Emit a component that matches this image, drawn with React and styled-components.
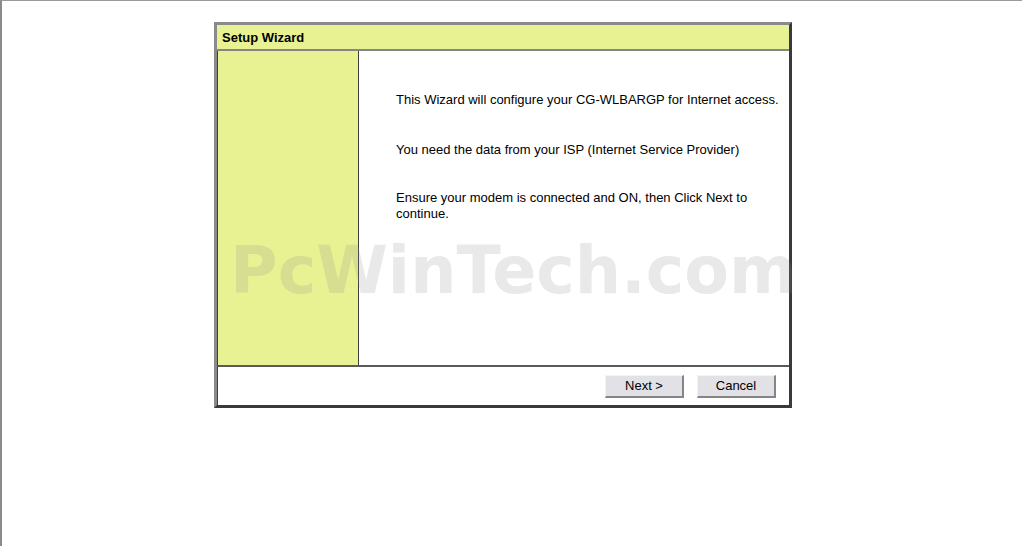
import React from "react";
import styled, { createGlobalStyle } from "styled-components";

const GlobalStyle = createGlobalStyle`
  html, body {
    margin: 0;
    padding: 0;
    background: #fff;
  }
  body {
    font-family: "Liberation Sans", Arial, sans-serif;
    color: #000;
  }
  * {
    box-sizing: border-box;
  }
`;

const Page = styled.div`
  position: relative;
  width: 100vw;
  height: 100vh;
  border-top: 1px solid #9a9a9a;
  border-left: 2px solid #8a8a8a;
  padding: 21px 18px 0 0;
  display: flex;
  justify-content: center;
  align-items: flex-start;
  overflow: hidden;
`;

const Frame = styled.div`
  width: 578px;
  height: 386px;
  display: flex;
  flex-direction: column;
  border-style: solid;
  border-width: 3px;
  border-color: #8a8a8a #3a3a3a #3a3a3a #8a8a8a;
  background: #fff;
`;

const Header = styled.div`
  flex: 0 0 26px;
  display: flex;
  align-items: center;
  padding-left: 5px;
  background: #e9f292;
  border-bottom: 2px solid #858585;
  font-size: 13px;
  font-weight: bold;
`;

const Body = styled.div`
  flex: 0 0 316px;
  display: flex;
  border-left: 1px solid #404040;
  border-bottom: 2px solid #5a5a5a;
`;

const SidePane = styled.div`
  flex: 0 0 141px;
  background: #e9f292;
  border-right: 1px solid #404040;
`;

const Content = styled.div`
  flex: 1;
  padding: 41px 3px 0 37px;
  font-size: 13px;
  line-height: 16px;
`;

const Para = styled.p`
  margin: ${(p) => p.$top || 0}px 0 0 0;
`;

const Footer = styled.div`
  flex: 1;
  display: flex;
  justify-content: flex-end;
  align-items: center;
  gap: 13px;
  padding-right: 13px;
  border-left: 1px solid #404040;
`;

const Button = styled.button`
  width: 79px;
  height: 23px;
  padding: 0;
  font-family: "Liberation Sans", Arial, sans-serif;
  font-size: 13px;
  color: #000;
  background: #e1e1e6;
  border-style: solid;
  border-width: 1px 2px 2px 1px;
  border-color: #f4f4f4 #858585 #858585 #f4f4f4;
  cursor: pointer;
`;

const Watermark = styled.div`
  position: absolute;
  left: 228px;
  top: 237px;
  font-family: "DejaVu Sans", sans-serif;
  font-weight: bold;
  font-size: 65px;
  line-height: 65px;
  white-space: nowrap;
  color: rgba(145, 145, 145, 0.2);
  pointer-events: none;
`;

export default function App() {
  return (
    <>
      <GlobalStyle />
      <Page>
        <Frame>
          <Header>Setup Wizard</Header>
          <Body>
            <SidePane />
            <Content>
              <Para>This Wizard will configure your CG-WLBARGP for Internet access.</Para>
              <Para $top={34}>You need the data from your ISP (Internet Service Provider)</Para>
              <Para $top={32}>
                Ensure your modem is connected and ON, then Click Next to continue.
              </Para>
            </Content>
          </Body>
          <Footer>
            <Button>Next &gt;</Button>
            <Button>Cancel</Button>
          </Footer>
        </Frame>
        <Watermark>PcWinTech.com</Watermark>
      </Page>
    </>
  );
}
